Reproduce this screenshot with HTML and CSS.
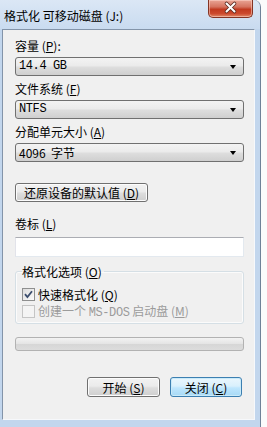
FILE: index.html
```html
<!DOCTYPE html>
<html lang="zh-CN">
<head>
<meta charset="utf-8">
<title>格式化 可移动磁盘 (J:)</title>
<link rel="stylesheet" href="styles.css">
</head>
<body>
<div class="window">
  <div class="titlebar">
    <span class="title">格式化 可移动磁盘 (J:)</span>
    <div class="close">
      <svg width="45" height="18" viewBox="0 0 45 18">
        <path d="M18.5 4.5 L26.5 12.5 M26.5 4.5 L18.5 12.5" stroke="#5a2a20" stroke-width="3.6" stroke-linecap="round" fill="none"/>
        <path d="M18.5 4.5 L26.5 12.5 M26.5 4.5 L18.5 12.5" stroke="#ffffff" stroke-width="2" stroke-linecap="round" fill="none"/>
      </svg>
    </div>
  </div>
  <div class="client">
    <div class="label">容量 (<u>P</u>):</div>
    <div class="combo"><span class="mono">14.4 GB</span><span class="arrow"></span></div>

    <div class="label next">文件系统 (<u>F</u>)</div>
    <div class="combo"><span class="mono">NTFS</span><span class="arrow"></span></div>

    <div class="label next">分配单元大小 (<u>A</u>)</div>
    <div class="combo"><span>4096&nbsp; 字节</span><span class="arrow"></span></div>

    <div class="restore btn">还原设备的默认值 (<u>D</u>)</div>

    <div class="label vol">卷标 (<u>L</u>)</div>
    <div class="input"></div>

    <fieldset class="group">
      <legend>格式化选项 (<u>O</u>)</legend>
      <div class="row">
        <span class="check on">
          <svg width="11" height="11" viewBox="0 0 11 11"><path d="M2 5.2 L4.4 8 L9 2.2" stroke="#3b4d6d" stroke-width="1.8" fill="none"/></svg>
        </span>
        <span>快速格式化 (<u>Q</u>)</span>
      </div>
      <div class="row disabled">
        <span class="check off"></span>
        <span>创建一个 <span class="mono">MS-DOS</span> 启动盘 (<u>M</u>)</span>
      </div>
    </fieldset>

    <div class="progress"></div>

    <div class="actions">
      <div class="btn action">开始 (<u>S</u>)</div>
      <div class="btn action default">关闭 (<u>C</u>)</div>
    </div>
  </div>
</div>
</body>
</html>
```
FILE: styles.css
```css
html, body {
  margin: 0;
  padding: 0;
  background: #fbfbfb;
  overflow: hidden;
}
body {
  font-family: "Noto Sans CJK SC", "Noto Sans", sans-serif;
  font-size: 12px;
  color: #000;
}
.window {
  width: 260px;
  height: 440px;
  background: #c2d6ed;
  border-right: 1px solid #6f8198;
  border-top-right-radius: 7px;
  display: flex;
  flex-direction: column;
}
.titlebar {
  height: 29px;
  display: flex;
  align-items: flex-start;
  background: linear-gradient(#dbe7f5, #c9dbf0);
  border-top-right-radius: 7px;
  flex: none;
}
.title {
  padding: 8px 0 0 4px;
  line-height: 16px;
  font-size: 12px;
  white-space: nowrap;
}
.close {
  margin-left: auto;
  margin-right: 7px;
  width: 45px;
  height: 18px;
  box-sizing: border-box;
  border: 1px solid #843424;
  border-top: none;
  border-radius: 0 0 5px 5px;
  background: linear-gradient(#e9a595 0%, #d57460 40%, #c13a20 55%, #cc4a2e 80%, #e08a6a 100%);
  box-shadow: inset 0 0 0 1px rgba(255, 220, 210, 0.5);
  flex: none;
}
.close svg {
  display: block;
  margin: -1px 0 0 -1px;
}
.client {
  margin-left: 2px;
  width: 253px;
  height: 391px;
  box-sizing: border-box;
  border: 1px solid;
  border-color: #8394a9 #f6f8fb #f6f8fb #8394a9;
  background: #f0f0f0;
  padding: 8px 10px 0 12px;
  display: flex;
  flex-direction: column;
  flex: none;
}
u {
  text-decoration: underline;
  text-underline-offset: 1px;
}
.label {
  line-height: 15px;
  white-space: nowrap;
}
.label.next {
  margin-top: 5px;
}
.combo {
  margin-top: 4px;
  height: 19px;
  box-sizing: border-box;
  border: 1px solid #707070;
  border-radius: 3px;
  background: linear-gradient(#f3f3f3 0%, #ebebeb 45%, #dddddd 55%, #cfcfcf 100%);
  display: flex;
  align-items: center;
  padding: 0 7px 0 3px;
  line-height: 15px;
}
.mono {
  font-family: "Liberation Mono", monospace;
  font-size: 12px;
  letter-spacing: -0.4px;
}
.arrow {
  margin-left: auto;
  width: 0;
  height: 0;
  border-left: 3.5px solid transparent;
  border-right: 3.5px solid transparent;
  border-top: 4px solid #000;
}
.btn {
  box-sizing: border-box;
  border: 1px solid #707070;
  border-radius: 3px;
  background: linear-gradient(#f2f2f2 0%, #ebebeb 45%, #dddddd 55%, #cfcfcf 100%);
  box-shadow: inset 0 0 0 1px #fcfcfc;
  display: flex;
  align-items: center;
  justify-content: center;
  line-height: 15px;
  white-space: nowrap;
}
.restore {
  margin-top: 21px;
  width: 133px;
  height: 19px;
}
.label.vol {
  margin-top: 14px;
}
.input {
  margin-top: 6px;
  height: 20px;
  box-sizing: border-box;
  background: #fff;
  border: 1px solid;
  border-color: #abadb3 #e3e9ef #e3e9ef #e2e3ea;
}
.group {
  margin: 7px 0 0 0;
  padding: 0 0 3px 6px;
  border: 1px solid #d5dfe5;
  border-radius: 3px;
  box-shadow: inset 0 0 0 1px #fbfbfb;
  min-width: 0;
}
.group legend {
  padding: 0 2px 0 0;
  line-height: 15px;
}
.row {
  height: 17px;
  display: flex;
  align-items: center;
  gap: 3px;
  line-height: 15px;
  white-space: nowrap;
}
.group legend + .row {
  margin-top: 7px;
}
.row.disabled {
  color: #9b9b9b;
}
.check {
  width: 13px;
  height: 13px;
  box-sizing: border-box;
  border: 1px solid #8e8f8f;
  background: linear-gradient(135deg, #dcdcdc, #fbfbfb);
  display: flex;
  align-items: center;
  justify-content: center;
  flex: none;
}
.check.off {
  border-color: #c5c5c5;
  background: #f4f4f4;
}
.check svg {
  display: block;
}
.progress {
  margin-top: 13px;
  height: 14px;
  box-sizing: border-box;
  border: 1px solid #b2b2b2;
  border-radius: 3px;
  background: linear-gradient(#f3f3f3 0%, #e4e4e4 50%, #d6d6d6 51%, #dcdcdc 100%);
}
.actions {
  margin-top: 26px;
  display: flex;
  justify-content: flex-end;
  gap: 10px;
  padding-right: 2px;
}
.action {
  width: 72px;
  height: 20px;
}
.action:first-child {
  width: 73px;
}
.action.default {
  border-color: #3c7fb1;
  background: linear-gradient(#eaf6fd 0%, #d9f0fc 45%, #bee6fd 55%, #a7d9f5 100%);
  box-shadow: inset 0 0 0 1px #c9eaf9;
}
```
